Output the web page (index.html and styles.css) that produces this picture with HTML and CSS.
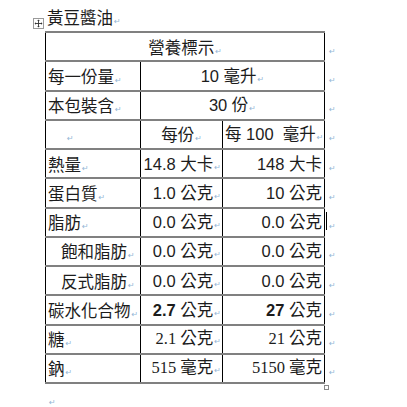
FILE: index.html
```html
<!DOCTYPE html>
<html lang="zh-Hant">
<head>
<meta charset="utf-8">
<title>黃豆醬油</title>
<link rel="stylesheet" href="styles.css">
</head>
<body>
<div class="page">
  <p class="title">黃豆醬油<span class="pm">↵</span></p>
  <div class="tablewrap">
    <span class="handle"><svg viewBox="0 0 9 9" width="9" height="9"><path d="M4.5 1.2v6.6M1.2 4.5h6.6" stroke="#333" stroke-width="0.9" fill="none"/><path d="M4.5 0.5l1.3 1.5h-2.6zM4.5 8.5l1.3-1.5h-2.6zM0.5 4.5l1.5-1.3v2.6zM8.5 4.5l-1.5-1.3v2.6z" fill="#333"/></svg></span>
    <table class="nut">
      <colgroup><col class="c1"><col class="c2"><col class="c3"><col class="c4"></colgroup>
      <tr><td colspan="3" class="center">營養標示<span class="pm">↵</span></td><td class="end"><span class="pm">↵</span></td></tr>
      <tr><td>每一份量<span class="pm">↵</span></td><td colspan="2" class="center a">10 毫升<span class="pm">↵</span></td><td class="end"><span class="pm">↵</span></td></tr>
      <tr><td>本包裝含<span class="pm">↵</span></td><td colspan="2" class="center a">30 份<span class="pm">↵</span></td><td class="end"><span class="pm">↵</span></td></tr>
      <tr><td class="blank"><span class="pm">↵</span></td><td class="center">每份<span class="pm">↵</span></td><td class="center a pre">每 100  毫升<span class="pm">↵</span></td><td class="end"><span class="pm">↵</span></td></tr>
      <tr><td>熱量<span class="pm">↵</span></td><td class="r a">14.8 大卡<span class="pm">↵</span></td><td class="r3 a">148 大卡</td><td class="end"><span class="pm">↵</span></td></tr>
      <tr><td>蛋白質<span class="pm">↵</span></td><td class="r a">1.0 公克<span class="pm">↵</span></td><td class="r3 a">10 公克</td><td class="end"><span class="pm">↵</span></td></tr>
      <tr><td>脂肪<span class="pm">↵</span></td><td class="r a">0.0 公克<span class="pm">↵</span></td><td class="r3 a">0.0 公克</td><td class="end"><span class="pm">↵</span></td></tr>
      <tr><td class="ind">飽和脂肪<span class="pm">↵</span></td><td class="r a">0.0 公克<span class="pm">↵</span></td><td class="r3 a">0.0 公克</td><td class="end"><span class="pm">↵</span></td></tr>
      <tr><td class="ind">反式脂肪<span class="pm">↵</span></td><td class="r a">0.0 公克<span class="pm">↵</span></td><td class="r3 a">0.0 公克</td><td class="end"><span class="pm">↵</span></td></tr>
      <tr><td>碳水化合物<span class="pm">↵</span></td><td class="r a"><b>2.7</b> 公克<span class="pm">↵</span></td><td class="r3 a"><b>27</b> 公克</td><td class="end"><span class="pm">↵</span></td></tr>
      <tr><td>糖<span class="pm">↵</span></td><td class="r t">2.1 公克<span class="pm">↵</span></td><td class="r3 t">21 公克</td><td class="end"><span class="pm">↵</span></td></tr>
      <tr><td>鈉<span class="pm">↵</span></td><td class="r t">515 毫克<span class="pm">↵</span></td><td class="r3 t">5150 毫克</td><td class="end"><span class="pm">↵</span></td></tr>
    </table>
    <span class="cursor"></span>
    <span class="resize"></span>
  </div>
  <p class="after"><span class="pm">↵</span></p>
</div>
</body>
</html>
```

FILE: styles.css
```css
html, body {
  margin: 0;
  padding: 0;
  background: #ffffff;
}

body {
  font-family: "Noto Sans CJK TC", "Noto Sans CJK SC", sans-serif;
  font-size: 16.5px;
  color: #1c1c1c;
}

.page {
  position: relative;
  padding-top: 5px;
}

.title {
  margin: 0;
  padding-left: 47px;
  height: 26px;
  line-height: 24px;
}

.pm {
  font-family: "DejaVu Sans", sans-serif;
  font-size: 8px;
  line-height: 8px;
  color: #94b6d6;
  margin-left: 1px;
  vertical-align: baseline;
  font-weight: normal;
}

.tablewrap {
  position: relative;
  margin-left: 45px;
  width: 300px;
}

.handle {
  position: absolute;
  left: -12px;
  top: -13px;
  width: 11px;
  height: 11px;
  border: 1px solid #9a9a9a;
  background: #ffffff;
  box-sizing: border-box;
  display: flex;
  align-items: center;
  justify-content: center;
}

.handle svg {
  display: block;
}

table.nut {
  border-collapse: collapse;
  table-layout: fixed;
  width: 293px;
}

col.c1 { width: 95px; }
col.c2 { width: 82px; }
col.c3 { width: 102px; }
col.c4 { width: 14px; }

.nut td {
  height: 27.25px;
  padding: 0 2px;
  border-top: 2px solid #808080;
  border-bottom: 2px solid #808080;
  border-left: 1px solid #000000;
  border-right: 1px solid #000000;
  vertical-align: middle;
  white-space: nowrap;
  line-height: 20px;
  overflow: visible;
}

.nut td.end {
  border-top: 0;
  border-bottom: 0;
  border-right: 0;
  border-left: 0;
  padding-left: 3px;
}

.center { text-align: center; }
.r { text-align: right; padding-right: 1px !important; }
.r3 { text-align: right; padding-right: 2px !important; }
.ind { padding-left: 15px !important; }
.blank { padding-left: 20px !important; }
.pre { white-space: pre !important; }

.a { font-family: "Liberation Sans", "Noto Sans CJK TC", sans-serif; }
.t { font-family: "Liberation Serif", "Noto Sans CJK TC", serif; }

.cursor {
  position: absolute;
  left: 281px;
  top: 181px;
  width: 1px;
  height: 18px;
  background: #000000;
}

.resize {
  position: absolute;
  left: 279px;
  bottom: -6px;
  width: 5px;
  height: 5px;
  border: 1px solid #8a8a8a;
  box-sizing: border-box;
  background: #ffffff;
}

.after {
  margin: 0;
  padding-left: 48px;
  padding-top: 6px;
  line-height: 16px;
}
```
